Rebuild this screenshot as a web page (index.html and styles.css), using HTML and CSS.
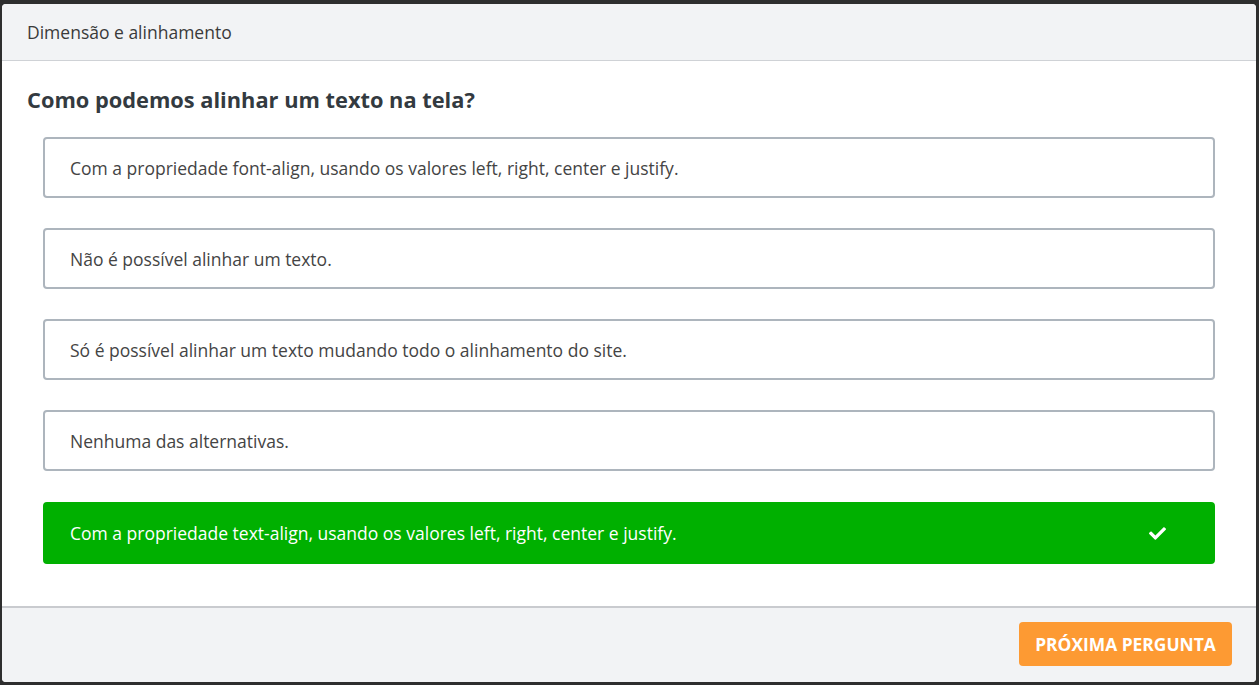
FILE: index.html
```html
<!DOCTYPE html>
<html lang="pt">
<head>
<meta charset="utf-8">
<title>Quiz</title>
<link rel="stylesheet" href="styles.css">
</head>
<body>
<div class="modal">
  <div class="modal-header">Dimensão e alinhamento</div>
  <div class="modal-body">
    <h2 class="question">Como podemos alinhar um texto na tela?</h2>
    <ul class="options">
      <li class="option">Com a propriedade font-align, usando os valores left, right, center e justify.</li>
      <li class="option">Não é possível alinhar um texto.</li>
      <li class="option">Só é possível alinhar um texto mudando todo o alinhamento do site.</li>
      <li class="option">Nenhuma das alternativas.</li>
      <li class="option correct">
        <span>Com a propriedade text-align, usando os valores left, right, center e justify.</span>
        <svg class="check" viewBox="0 0 512 512" width="17" height="17"><path fill="#fff" d="M173.9 439.4 7.5 273c-10-10-10-26.2 0-36.2l36.2-36.2c10-10 26.2-10 36.2 0L192 312.7 432.1 72.6c10-10 26.2-10 36.2 0l36.2 36.2c10 10 10 26.2 0 36.2L210.1 439.4c-10 10-26.2 10-36.2 0z"/></svg>
      </li>
    </ul>
  </div>
  <div class="modal-footer">
    <button class="next">PRÓXIMA PERGUNTA</button>
  </div>
</div>
</body>
</html>
```
FILE: styles.css
```css
* { box-sizing: border-box; }
html, body { margin: 0; height: 100%; }
body {
  background: #2e2e2e;
  padding: 4px 3px 3px 2px;
  font-family: "Open Sans", "Liberation Sans", sans-serif;
  color: #333;
}
.modal {
  background: #fff;
  border-radius: 4px;
  height: 678px;
  display: flex;
  flex-direction: column;
  overflow: hidden;
}
.modal-header {
  background: #f2f3f5;
  height: 57px;
  border-bottom: 1px solid #cfd2d6;
  padding: 0 25px;
  display: flex;
  align-items: center;
  font-size: 17.5px;
  color: #3a3a3a;
}
.modal-body {
  flex: 1;
  padding: 25px 41px 0 25px;
}
.question {
  margin: 0 0 23px;
  font-size: 21.8px;
  font-weight: 700;
  color: #333a40;
  line-height: 28px;
}
.options {
  list-style: none;
  margin: 0 0 0 16px;
  padding: 0;
  display: flex;
  flex-direction: column;
  gap: 30px;
}
.option {
  height: 61px;
  border: 2px solid #adb5bd;
  border-radius: 4px;
  padding: 0 25px;
  display: flex;
  align-items: center;
  font-size: 17.5px;
  color: #444;
}
.option.correct {
  height: 62px;
  margin-top: 1px;
  background: #00b000;
  border-color: #00b000;
  color: #fff;
  justify-content: space-between;
  padding-right: 47px;
}
.check { display: block; }
.modal-footer {
  height: 76px;
  background: #f2f3f5;
  border-top: 2px solid #c9cbcf;
  display: flex;
  align-items: center;
  justify-content: flex-end;
  padding: 0 24px 2px 0;
}
.next {
  background: #fd9a33;
  color: #fff;
  border: none;
  border-radius: 4px;
  height: 44px;
  width: 213px;
  font-family: "Open Sans", "Liberation Sans", sans-serif;
  font-weight: 700;
  font-size: 17.4px;
}
```
